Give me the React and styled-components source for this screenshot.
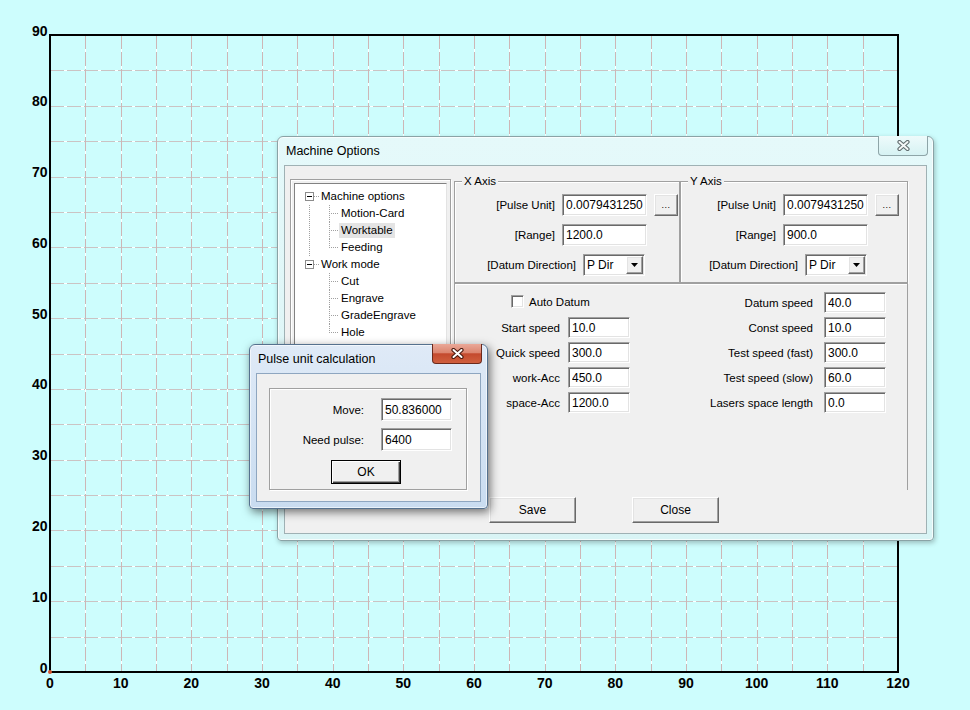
import React from 'react';
import styled, { createGlobalStyle, css } from 'styled-components';

const GlobalStyle = createGlobalStyle`
  html, body {
    margin: 0;
    padding: 0;
    background: #cdfdfd;
  }
  body {
    font-family: "Liberation Sans", Arial, sans-serif;
    color: #000;
  }
`;

const sunken = css`
  border: 1px solid;
  border-color: #a0a0a0 #fff #fff #a0a0a0;
  box-shadow: inset 1px 1px #696969, inset -1px -1px #e3e3e3;
`;

const raised = css`
  border: 1px solid;
  border-color: #fff #696969 #696969 #fff;
  box-shadow: inset -1px -1px #a0a0a0, inset 1px 1px #e3e3e3;
`;

const etched = css`
  border: 1px solid #a0a0a0;
  box-shadow: inset 1px 1px #fff, 1px 1px #fff;
`;

const Desktop = styled.div`
  position: relative;
  width: 970px;
  height: 710px;
  overflow: hidden;
  background: #cdfdfd;
`;

const ChartSvg = styled.svg`
  display: block;
  font-family: "Liberation Sans", Arial, sans-serif;
`;

/* ---------- windows ---------- */

const Window = styled.div`
  position: absolute;
  left: ${p => p.$left}px;
  top: ${p => p.$top}px;
  width: ${p => p.$width}px;
  height: ${p => p.$height}px;
  box-sizing: border-box;
  display: flex;
  flex-direction: column;
  border: 1px solid ${p => (p.$active ? '#55718e' : '#8aa3a6')};
  border-radius: 6px 6px 4px 4px;
  background: ${p =>
    p.$active
      ? 'linear-gradient(to bottom, #dfeaf7, #c9dcf0)'
      : 'linear-gradient(to bottom, #e5f9fa, #d9f4f5)'};
  box-shadow: ${p =>
    p.$active
      ? 'inset 0 0 0 1px rgba(255,255,255,0.6), 2px 3px 10px rgba(0,0,0,0.55)'
      : 'inset 0 0 0 1px rgba(255,255,255,0.7), 1px 2px 5px rgba(0,0,0,0.25)'};
`;

const TitleBar = styled.div`
  display: flex;
  align-items: center;
  height: 28px;
  flex-shrink: 0;
`;

const Title = styled.div`
  flex: 1;
  padding-left: 8px;
  font-size: 12.5px;
  color: #000;
`;

const CloseButton = styled.div`
  align-self: flex-start;
  margin: -1px 5px 0 0;
  width: 50px;
  height: 20px;
  box-sizing: border-box;
  display: flex;
  align-items: center;
  justify-content: center;
  border-radius: 0 0 4px 4px;
  border: 1px solid ${p => (p.$active ? '#6b2a1c' : '#8ea5a8')};
  border-top: none;
  background: ${p =>
    p.$active
      ? 'linear-gradient(to bottom, #eaa898 0%, #dc8670 45%, #c44a2e 52%, #d0603f 100%)'
      : 'linear-gradient(to bottom, #eefbfb, #d6f2f3)'};
`;

const Client = styled.div`
  flex: 1;
  margin: 0 6px 6px;
  background: #f0f0f0;
  border: 1px solid ${p => (p.$active ? '#8ea6c0' : '#9fb1b4')};
`;

/* ---------- common controls ---------- */

const FieldLabel = styled.span`
  width: ${p => (p.$w ? `${p.$w}px` : 'auto')};
  flex-shrink: 0;
  align-self: center;
  text-align: right;
  white-space: nowrap;
  font-size: 11.5px;
`;

const TextField = styled.input`
  ${sunken};
  width: ${p => (p.$w ? `${p.$w}px` : '100%')};
  height: 100%;
  box-sizing: border-box;
  margin: 0;
  padding: 0 0 0 3px;
  background: #fff;
  font-family: "Liberation Sans", Arial, sans-serif;
  font-size: 12px;
  color: #000;
  outline: none;
`;

const DotsButton = styled.span`
  ${raised};
  width: 24px;
  height: 100%;
  box-sizing: border-box;
  display: flex;
  align-items: flex-end;
  justify-content: center;
  padding-bottom: 5px;
  background: #f0f0f0;
  font-size: 9px;
  letter-spacing: 0.5px;
`;

const Combo = styled.div`
  ${sunken};
  width: ${p => p.$w}px;
  height: 100%;
  box-sizing: border-box;
  display: flex;
  background: #fff;
`;

const ComboText = styled.span`
  flex: 1;
  display: flex;
  align-items: center;
  padding-left: 3px;
  font-size: 12px;
`;

const DropButton = styled.span`
  ${raised};
  width: 17px;
  box-sizing: border-box;
  margin: 1px;
  display: flex;
  align-items: center;
  justify-content: center;
  background: #f0f0f0;
`;

const PushButton = styled.button`
  ${raised};
  width: ${p => p.$w}px;
  height: ${p => p.$h}px;
  box-sizing: border-box;
  margin: 0;
  padding: 0;
  background: #f0f0f0;
  font-family: "Liberation Sans", Arial, sans-serif;
  font-size: 12px;
  color: #000;
`;

const DefaultButton = styled(PushButton)`
  border: 1px solid #000;
  box-shadow: inset 1px 1px #fff, inset -1px -1px #404040, inset -2px -2px #a0a0a0;
`;

const CheckBox = styled.span`
  ${sunken};
  width: 13px;
  height: 13px;
  box-sizing: border-box;
  background: #fff;
`;

/* ---------- machine options layout ---------- */

const OptionsBody = styled.div`
  display: flex;
  align-items: flex-start;
  padding: 13px 0 0 5px;
`;

const TreeFrame = styled.div`
  ${etched};
  width: 161px;
  height: 311px;
  box-sizing: border-box;
  padding: 3px;
  display: flex;
`;

const TreeBox = styled.div`
  flex: 1;
  background: #fff;
  border: 1px solid;
  border-color: #828282 #e3e3e3 #e3e3e3 #828282;
  padding: 4px 0 0 10px;
`;

const dotsV = 'repeating-linear-gradient(to bottom, #a0a0a0 0 1px, transparent 1px 2px)';
const dotsH = 'repeating-linear-gradient(to right, #a0a0a0 0 1px, transparent 1px 2px)';

const RootRow = styled.div`
  display: flex;
  align-items: center;
  height: 17px;
`;

const ExpandBox = styled.span`
  width: 9px;
  height: 9px;
  box-sizing: border-box;
  border: 1px solid #8c8c8c;
  background: linear-gradient(#000, #000) center / 5px 1px no-repeat, #fff;
`;

const RootDash = styled.span`
  width: 5px;
  height: 1px;
  background: ${dotsH};
`;

const TreeLabel = styled.span`
  padding: 0 2px;
  line-height: 15px;
  font-size: 11.5px;
  white-space: nowrap;
  background: ${p => (p.$selected ? '#e4e4e4' : 'transparent')};
`;

const Children = styled.div`
  padding-left: 24px;
  background: ${p => (p.$continues ? `${dotsV} 4px 0 / 1px 100% no-repeat` : 'none')};
`;

const ChildRow = styled.div`
  display: flex;
  align-items: center;
  height: 17px;
`;

const Connector = styled.span`
  width: 10px;
  align-self: stretch;
  background:
    ${dotsV} 0 0 / 1px ${p => (p.$last ? '9px' : '100%')} no-repeat,
    ${dotsH} 0 8px / 9px 1px no-repeat;
`;

const RightColumn = styled.div`
  width: 454px;
  margin: 2px 0 0 3px;
  display: flex;
  flex-direction: column;
`;

const AxisRow = styled.div`
  display: flex;
`;

const Group = styled.div`
  ${etched};
  width: ${p => p.$w}px;
  height: ${p => p.$h}px;
  box-sizing: border-box;
`;

const Legend = styled.span`
  display: block;
  width: fit-content;
  margin: -7px 0 0 7px;
  padding: 0 2px;
  line-height: 13px;
  font-size: 11.5px;
  background: #f0f0f0;
`;

const AxisForm = styled.div`
  display: grid;
  grid-auto-rows: 22px;
  row-gap: 8px;
  margin-top: 6px;
`;

const Row = styled.div`
  display: flex;
  align-items: stretch;
  gap: 7px;
`;

const LowerPanel = styled.div`
  width: 454px;
  height: 207px;
  box-sizing: border-box;
  border: 1px solid #a0a0a0;
  border-bottom: none;
  box-shadow: inset 1px 1px #fff;
  display: flex;
  align-items: flex-start;
  padding-top: 8px;
`;

const SpeedForm = styled.div`
  display: grid;
  grid-template-columns: ${p => p.$label}px 62px;
  column-gap: ${p => p.$gap}px;
  grid-auto-rows: 21px;
  row-gap: 4px;
  margin-left: ${p => p.$offset}px;
`;

const CheckRow = styled.label`
  grid-column: 1 / -1;
  display: flex;
  align-items: center;
  gap: 5px;
  padding-left: 50px;
  font-size: 11.5px;
  margin-top: -2px;
`;

const ButtonRow = styled.div`
  display: flex;
  gap: 56px;
  margin-top: 7px;
  padding-left: 35px;
`;

/* ---------- pulse dialog layout ---------- */

const PulseBody = styled.div`
  padding: 14px 0 0 12px;
`;

const PulseForm = styled.div`
  display: grid;
  grid-template-columns: 84px 71px;
  column-gap: 17px;
  grid-auto-rows: 23px;
  row-gap: 7px;
  padding: 9px 0 0 10px;
`;

const OkSlot = styled.div`
  grid-column: 1 / -1;
  display: flex;
  justify-content: center;
  margin-top: 2px;
`;

/* ---------- drawings ---------- */

function CloseGlyph({ active }) {
  return (
    <svg width="15" height="11" viewBox="0 0 15 11">
      <path
        d="M3.5 2 L11.5 9 M11.5 2 L3.5 9"
        stroke={active ? '#4a1a10' : '#626e70'}
        strokeWidth="4.2"
        strokeLinecap="round"
        fill="none"
      />
      <path
        d="M3.5 2 L11.5 9 M11.5 2 L3.5 9"
        stroke={active ? '#fff' : '#f4f7f7'}
        strokeWidth="2"
        strokeLinecap="round"
        fill="none"
      />
    </svg>
  );
}

function DownArrow() {
  return (
    <svg width="7" height="4" viewBox="0 0 7 4">
      <polygon points="0,0 7,0 3.5,4" fill="#000" />
    </svg>
  );
}

const PLOT = { left: 50, top: 35, right: 898, bottom: 672 };
const STEP_X = (PLOT.right - PLOT.left) / 24;
const STEP_Y = (PLOT.bottom - PLOT.top) / 18;

function Chart() {
  const vLines = Array.from({ length: 23 }, (_, i) => Math.round(PLOT.left + (i + 1) * STEP_X) + 0.5);
  const hLines = Array.from({ length: 17 }, (_, i) => Math.round(PLOT.top + (i + 1) * STEP_Y) + 0.5);
  const xTicks = Array.from({ length: 13 }, (_, i) => i * 10);
  const yTicks = Array.from({ length: 10 }, (_, i) => i * 10);
  return (
    <ChartSvg width="970" height="710" viewBox="0 0 970 710">
      {hLines.map(y => (
        <g key={'h' + y}>
          <line x1={PLOT.left} y1={y} x2={PLOT.right} y2={y} stroke="#fff" />
          <line x1={PLOT.left} y1={y} x2={PLOT.right} y2={y} stroke="#cbc3c3" strokeDasharray="14 3" />
        </g>
      ))}
      {vLines.map(x => (
        <g key={'v' + x}>
          <line x1={x} y1={PLOT.top} x2={x} y2={PLOT.bottom} stroke="#fff" />
          <line x1={x} y1={PLOT.top} x2={x} y2={PLOT.bottom} stroke="#cdb6b6" strokeDasharray="14 3" />
        </g>
      ))}
      <rect
        x={PLOT.left}
        y={PLOT.top}
        width={PLOT.right - PLOT.left}
        height={PLOT.bottom - PLOT.top}
        fill="none"
        stroke="#000"
        strokeWidth="2"
      />
      {yTicks.map(v => (
        <text
          key={'y' + v}
          x="47.5"
          y={PLOT.bottom - (v / 5) * STEP_Y + 0.5}
          textAnchor="end"
          fontSize="14"
          fontWeight="bold"
        >
          {v}
        </text>
      ))}
      {xTicks.map(v => (
        <text
          key={'x' + v}
          x={PLOT.left + (v / 5) * STEP_X}
          y="688"
          textAnchor="middle"
          fontSize="14"
          fontWeight="bold"
        >
          {v}
        </text>
      ))}
      <circle cx={PLOT.left} cy={PLOT.bottom} r="2" fill="#d9542c" />
    </ChartSvg>
  );
}

/* ---------- data ---------- */

const TREE = [
  { label: 'Machine options', children: ['Motion-Card', 'Worktable', 'Feeding'] },
  { label: 'Work mode', children: ['Cut', 'Engrave', 'GradeEngrave', 'Hole'] },
];

const AXES = [
  { name: 'X Axis', width: 226, labelW: 100, dirW: 121, pulse: '0.0079431250', range: '1200.0' },
  { name: 'Y Axis', width: 228, labelW: 95, dirW: 117, pulse: '0.0079431250', range: '900.0' },
];

const LEFT_SPEEDS = [
  ['Start speed', '10.0'],
  ['Quick speed', '300.0'],
  ['work-Acc', '450.0'],
  ['space-Acc', '1200.0'],
];

const RIGHT_SPEEDS = [
  ['Datum speed', '40.0'],
  ['Const speed', '10.0'],
  ['Test speed (fast)', '300.0'],
  ['Test speed (slow)', '60.0'],
  ['Lasers space length', '0.0'],
];

/* ---------- parts ---------- */

function Tree() {
  return (
    <TreeBox>
      {TREE.map((node, ni) => (
        <div key={node.label}>
          <RootRow>
            <ExpandBox />
            <RootDash />
            <TreeLabel>{node.label}</TreeLabel>
          </RootRow>
          <Children $continues={ni < TREE.length - 1}>
            {node.children.map((c, ci) => (
              <ChildRow key={c}>
                <Connector $last={ci === node.children.length - 1} />
                <TreeLabel $selected={c === 'Worktable'}>{c}</TreeLabel>
              </ChildRow>
            ))}
          </Children>
        </div>
      ))}
    </TreeBox>
  );
}

function AxisGroup({ axis }) {
  return (
    <Group $w={axis.width} $h={102}>
      <Legend>{axis.name}</Legend>
      <AxisForm>
        <Row>
          <FieldLabel $w={axis.labelW}>[Pulse Unit]</FieldLabel>
          <TextField $w={85} readOnly value={axis.pulse} />
          <DotsButton>...</DotsButton>
        </Row>
        <Row>
          <FieldLabel $w={axis.labelW}>[Range]</FieldLabel>
          <TextField $w={85} readOnly value={axis.range} />
        </Row>
        <Row>
          <FieldLabel $w={axis.dirW}>[Datum Direction]</FieldLabel>
          <Combo $w={62}>
            <ComboText>P Dir</ComboText>
            <DropButton>
              <DownArrow />
            </DropButton>
          </Combo>
        </Row>
      </AxisForm>
    </Group>
  );
}

function MachineOptions() {
  return (
    <Window $left={277} $top={136} $width={657} $height={405}>
      <TitleBar>
        <Title>Machine Options</Title>
        <CloseButton>
          <CloseGlyph />
        </CloseButton>
      </TitleBar>
      <Client>
        <OptionsBody>
          <TreeFrame>
            <Tree />
          </TreeFrame>
          <RightColumn>
            <AxisRow>
              {AXES.map(a => (
                <AxisGroup key={a.name} axis={a} />
              ))}
            </AxisRow>
            <LowerPanel>
              <SpeedForm $label={99} $gap={8} $offset={6}>
                <CheckRow>
                  <CheckBox />
                  Auto Datum
                </CheckRow>
                {LEFT_SPEEDS.map(([l, v]) => (
                  <React.Fragment key={l}>
                    <FieldLabel>{l}</FieldLabel>
                    <TextField readOnly value={v} />
                  </React.Fragment>
                ))}
              </SpeedForm>
              <SpeedForm $label={150} $gap={11} $offset={33}>
                {RIGHT_SPEEDS.map(([l, v]) => (
                  <React.Fragment key={l}>
                    <FieldLabel>{l}</FieldLabel>
                    <TextField readOnly value={v} />
                  </React.Fragment>
                ))}
              </SpeedForm>
            </LowerPanel>
            <ButtonRow>
              <PushButton $w={87} $h={26}>Save</PushButton>
              <PushButton $w={87} $h={26}>Close</PushButton>
            </ButtonRow>
          </RightColumn>
        </OptionsBody>
      </Client>
    </Window>
  );
}

function PulseDialog() {
  return (
    <Window $active $left={249} $top={344} $width={239} $height={165}>
      <TitleBar>
        <Title>Pulse unit calculation</Title>
        <CloseButton $active>
          <CloseGlyph active />
        </CloseButton>
      </TitleBar>
      <Client $active>
        <PulseBody>
          <Group $w={198} $h={102}>
            <PulseForm>
              <FieldLabel>Move:</FieldLabel>
              <TextField readOnly value="50.836000" />
              <FieldLabel>Need pulse:</FieldLabel>
              <TextField readOnly value="6400" />
              <OkSlot>
                <DefaultButton $w={70} $h={24}>OK</DefaultButton>
              </OkSlot>
            </PulseForm>
          </Group>
        </PulseBody>
      </Client>
    </Window>
  );
}

export default function App() {
  return (
    <>
      <GlobalStyle />
      <Desktop>
        <Chart />
        <MachineOptions />
        <PulseDialog />
      </Desktop>
    </>
  );
}
